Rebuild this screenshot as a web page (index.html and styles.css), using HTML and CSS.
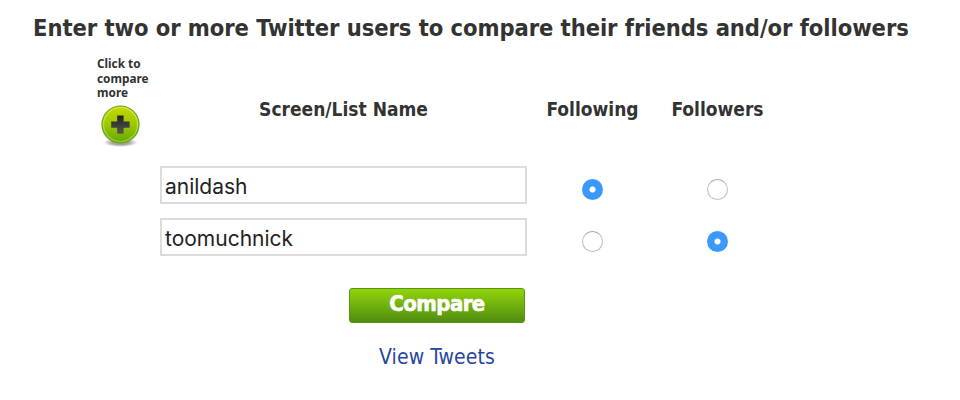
FILE: index.html
```
<!DOCTYPE html>
<html lang="en">
<head>
  <meta charset="UTF-8" />
  <title>Compare Twitter users</title>
  <link rel="stylesheet" href="styles.css">
</head>
<body>
  <h1>Enter two or more Twitter users to compare their friends and/or followers</h1>
  <form class="compare">
    <div class="row header">
      <div class="add">
        <div class="add-text">
          <div>Click to</div>
          <div>compare</div>
          <div>more</div>
        </div>
        <svg class="add-icon" width="42" height="44" viewBox="0 0 42 44">
          <defs>
            <linearGradient id="ball" x1="0" y1="0" x2="0" y2="1">
              <stop offset="0" stop-color="#c6d800" />
              <stop offset="0.5" stop-color="#9fc800" />
              <stop offset="1" stop-color="#62a800" />
            </linearGradient>
            <linearGradient id="rim" x1="0" y1="0" x2="0" y2="1">
              <stop offset="0" stop-color="#e6ee70" />
              <stop offset="1" stop-color="#a5dc3c" />
            </linearGradient>
            <linearGradient id="plus" x1="0" y1="0" x2="0" y2="1">
              <stop offset="0" stop-color="#222222" />
              <stop offset="1" stop-color="#555555" />
            </linearGradient>
            <radialGradient id="shade">
              <stop offset="0.5" stop-color="#666666" stop-opacity="0.6" />
              <stop offset="1" stop-color="#666666" stop-opacity="0" />
            </radialGradient>
          </defs>
          <ellipse cx="20.5" cy="38.5" rx="17" ry="4.5" fill="url(#shade)" />
          <circle cx="20.5" cy="20.5" r="18.5" fill="url(#ball)" stroke="#6aa524" stroke-width="1.2" />
          <circle cx="20.5" cy="20.5" r="17" fill="none" stroke="url(#rim)" stroke-width="1.2" opacity="0.7" />
          <path d="M17.2 11.5h6.4v6h6v6.2h-6v6h-6.4v-6h-6v-6.2h6z" fill="url(#plus)" />
        </svg>
      </div>
      <span class="label name-label">Screen/List Name</span>
      <span class="label following">Following</span>
      <span class="label followers">Followers</span>
    </div>
    <div class="row user">
      <input class="name" type="text" value="anildash">
      <input class="radio following" type="radio" name="user1" checked>
      <input class="radio followers" type="radio" name="user1">
    </div>
    <div class="row user">
      <input class="name" type="text" value="toomuchnick">
      <input class="radio following" type="radio" name="user2">
      <input class="radio followers" type="radio" name="user2" checked>
    </div>
    <div class="actions">
      <button class="submit" type="button">Compare</button>
      <a class="tweets" href="#">View Tweets</a>
    </div>
  </form>
</body>
</html>
```
FILE: styles.css
```
html, body {
  margin: 0;
  padding: 0;
  background: #fff;
  overflow: hidden;
}
body {
  height: 400px;
  font-family: Tahoma, "DejaVu Sans Condensed", "DejaVu Sans", sans-serif;
  color: #333;
}
h1 {
  margin: 0;
  padding: 14px 0 0 33px;
  height: 42px;
  box-sizing: border-box;
  font-size: 23.5px;
  line-height: 28px;
  letter-spacing: -0.06px;
  white-space: nowrap;
}
.compare {
  width: 780px;
}
.row {
  display: grid;
  grid-template-columns: 160px 367px 131px 119px;
  align-items: center;
}
.header {
  height: 124px;
  align-items: start;
}
.add {
  padding: 14px 0 0 97px;
}
.add-text {
  font: bold 11.8px/14.7px "Noto Sans", sans-serif;
}
.add-icon {
  display: block;
  margin: 4px 0 0 3px;
}
.label {
  margin-top: 55px;
  font-size: 19px;
  font-weight: bold;
  line-height: 24px;
  text-align: center;
  white-space: nowrap;
}
.user {
  height: 39px;
  margin-bottom: 13px;
}
.name {
  grid-column: 2;
  width: 367px;
  height: 38px;
  margin: 0 0 1px;
  padding: 2px 3px 0;
  box-sizing: border-box;
  border: 2px solid #dcdcdc;
  background: #fff;
  color: #222;
  font: 21px Inter, sans-serif;
}
.radio {
  appearance: none;
  justify-self: center;
  width: 21px;
  height: 21px;
  margin: 8px 0 0;
  border: 1.5px solid #bdbdbd;
  border-top-color: #a8a8a8;
  border-radius: 50%;
  background: #fff;
}
.radio:checked {
  border: 0;
  background: radial-gradient(circle, #fff 2.5px, #3b99fc 3.5px);
}
.actions {
  display: flex;
  flex-direction: column;
  align-items: center;
  width: 176px;
  margin: 18px 0 0 349px;
  padding-top: 0;
}
.user + .actions {
  margin-top: 31px;
}
.submit {
  width: 176px;
  height: 35px;
  padding: 0 0 4px;
  border: 1px solid #57960f;
  border-radius: 3px;
  background: linear-gradient(#93d40d, #4e8c10);
  color: #fff;
  font: bold 22px Tahoma, "DejaVu Sans Condensed", sans-serif;
  letter-spacing: -0.6px;
  -webkit-text-stroke: 0.6px #fff;
}
.tweets {
  margin-top: 21px;
  color: #2546a0;
  font-size: 21px;
  line-height: 26px;
  letter-spacing: 0.1px;
  text-decoration: none;
  white-space: nowrap;
}
```
